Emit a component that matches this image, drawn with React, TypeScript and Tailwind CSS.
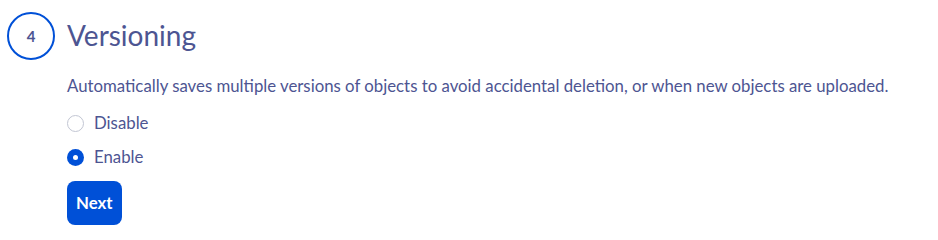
import React from "react";

export default function App() {
  return (
    <div className="w-[938px] h-[235px] bg-white font-['Lato','Noto_Sans',sans-serif] text-[#4d5592]">
      <div className="flex pl-[7px] pt-[12px]">
        <div className="w-[48px] h-[48px] shrink-0 rounded-full border-2 border-[#0050d7] flex items-center justify-center text-[15px] font-bold text-[#4d5592]">
          4
        </div>
        <div className="ml-[12px] flex flex-col">
          <h2 className="text-[28px] leading-[36px] mt-[5px] font-normal">Versioning</h2>
          <p className="mt-[21px] text-[16.8px] leading-[24px]">
            Automatically saves multiple versions of objects to avoid accidental deletion, or when new objects are uploaded.
          </p>
          <div className="mt-[13px] flex flex-col gap-[10px]">
            <label className="flex items-center gap-[10px] text-[16.8px] leading-[24px]">
              <span className="w-[17px] h-[17px] rounded-full border border-[#c2c6d3] bg-white" />
              Disable
            </label>
            <label className="flex items-center gap-[10px] text-[16.8px] leading-[24px]">
              <span className="w-[17px] h-[17px] rounded-full bg-[#0050d7] flex items-center justify-center">
                <span className="w-[5px] h-[5px] rounded-full bg-white" />
              </span>
              Enable
            </label>
          </div>
          <div className="mt-[12px]">
            <button className="h-[44px] px-[9px] rounded-[8px] bg-[#0050d7] text-white font-bold text-[16.8px]">
              Next
            </button>
          </div>
        </div>
      </div>
    </div>
  );
}
